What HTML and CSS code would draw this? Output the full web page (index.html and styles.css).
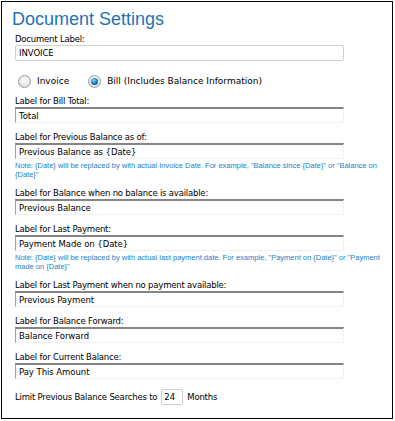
FILE: index.html
```html
<!DOCTYPE html>
<html lang="en">
<head>
    <meta charset="UTF-8">
    <title>Document Settings</title>
    <link rel="stylesheet" href="styles.css">
</head>
<body>
    <div class="settings">
        <h1 class="title">Document Settings</h1>

        <div class="field first">
            <label class="field-label">Document Label:</label>
            <input class="text-box plain" type="text" value="INVOICE">
        </div>

        <div class="doc-type">
            <label class="choice"><span class="radio"></span>Invoice</label>
            <label class="choice"><span class="radio on"></span>Bill (Includes Balance Information)</label>
        </div>

        <div class="field">
            <label class="field-label">Label for Bill Total:</label>
            <input class="text-box" type="text" value="Total">
        </div>

        <div class="field">
            <label class="field-label">Label for Previous Balance as of:</label>
            <input class="text-box" type="text" value="Previous Balance as {Date}">
            <p class="note">Note: {Date} will be replaced by with actual Invoice Date. For example, "Balance since {Date}" or "Balance on {Date}"</p>
        </div>

        <div class="field">
            <label class="field-label">Label for Balance when no balance is available:</label>
            <input class="text-box" type="text" value="Previous Balance">
        </div>

        <div class="field">
            <label class="field-label">Label for Last Payment:</label>
            <input class="text-box" type="text" value="Payment Made on {Date}">
            <p class="note">Note: {Date} will be replaced by with actual last payment date. For example, "Payment on {Date}" or "Payment made on {Date}"</p>
        </div>

        <div class="field">
            <label class="field-label">Label for Last Payment when no payment available:</label>
            <input class="text-box" type="text" value="Previous Payment">
        </div>

        <div class="field">
            <label class="field-label">Label for Balance Forward:</label>
            <input class="text-box" type="text" value="Balance Forward">
        </div>

        <div class="field">
            <label class="field-label">Label for Current Balance:</label>
            <input class="text-box" type="text" value="Pay This Amount">
        </div>

        <div class="limit">
            <span>Limit Previous Balance Searches to</span>
            <input class="text-box plain months" type="text" value="24">
            <span>Months</span>
        </div>
    </div>
</body>
</html>
```

FILE: styles.css
```css
body{
    margin: 0;
    background-color: #fff;
    font-family: "DejaVu Sans", Verdana, sans-serif;
    font-size: 8.5px;
    letter-spacing: -0.2px;
    color: #000;
}
.settings{
    box-sizing: border-box;
    width: 392px;
    height: 418px;
    margin: 1px 0 0 1px;
    border: 1px solid #000;
    padding: 0 0 0 10px;
}
.title{
    margin: 7px 0 0;
    font-family: "Liberation Sans", Arial, sans-serif;
    font-size: 18px;
    font-weight: normal;
    letter-spacing: 0;
    line-height: 20px;
    color: #2273b5;
}
.field{
    display: flex;
    flex-direction: column;
    width: 329px;
    margin: 8px 0 0 3px;
}
.field.first{
    margin-top: 4px;
}
.field-label{
    line-height: 12px;
}
.text-box{
    box-sizing: border-box;
    width: 100%;
    height: 16px;
    margin: 0;
    padding: 0 3px;
    font-family: "DejaVu Sans", Verdana, sans-serif;
    font-size: 8.5px;
    letter-spacing: -0.05px;
    color: #000;
    background-color: #fff;
    border-top: 2px solid #858585;
    border-left: 1px solid #a0a0a0;
    border-right: 1px solid #f0f0f0;
    border-bottom: 1px solid #f0f0f0;
    outline: none;
}
.text-box.plain{
    border: 1px solid #cfcfcf;
    border-radius: 2px;
}
.note{
    margin: 2px 0 0;
    width: 370px;
    font-family: "Liberation Sans", Arial, sans-serif;
    font-size: 7.5px;
    letter-spacing: 0;
    line-height: 9px;
    color: #1a82cc;
}
.doc-type{
    display: flex;
    align-items: center;
    height: 16px;
    padding: 12px 0 0 6px;
    font-size: 9px;
    letter-spacing: 0;
}
.doc-type + .field{
    margin-top: 6px;
}
.choice{
    display: flex;
    align-items: center;
    margin-right: 20px;
}
.choice:first-child{
    margin-right: 19px;
}
.radio{
    box-sizing: border-box;
    width: 13px;
    height: 13px;
    margin-right: 6px;
    border: 1px solid #9c9c9c;
    border-radius: 50%;
    background: radial-gradient(circle at 50% 40%, #fdfdfd 0%, #e8e8e8 55%, #c9c9c9 100%);
    position: relative;
}
.radio.on::after{
    content: "";
    position: absolute;
    left: 2px;
    top: 2px;
    width: 7px;
    height: 7px;
    border-radius: 50%;
    background: radial-gradient(circle at 40% 35%, #8fd6ff 0%, #1d83cf 45%, #063c6e 100%);
}
.limit{
    display: flex;
    align-items: center;
    gap: 4px;
    margin: 10px 0 0 3px;
}
.text-box.months{
    width: 22px;
    padding: 0 2px;
}
```
